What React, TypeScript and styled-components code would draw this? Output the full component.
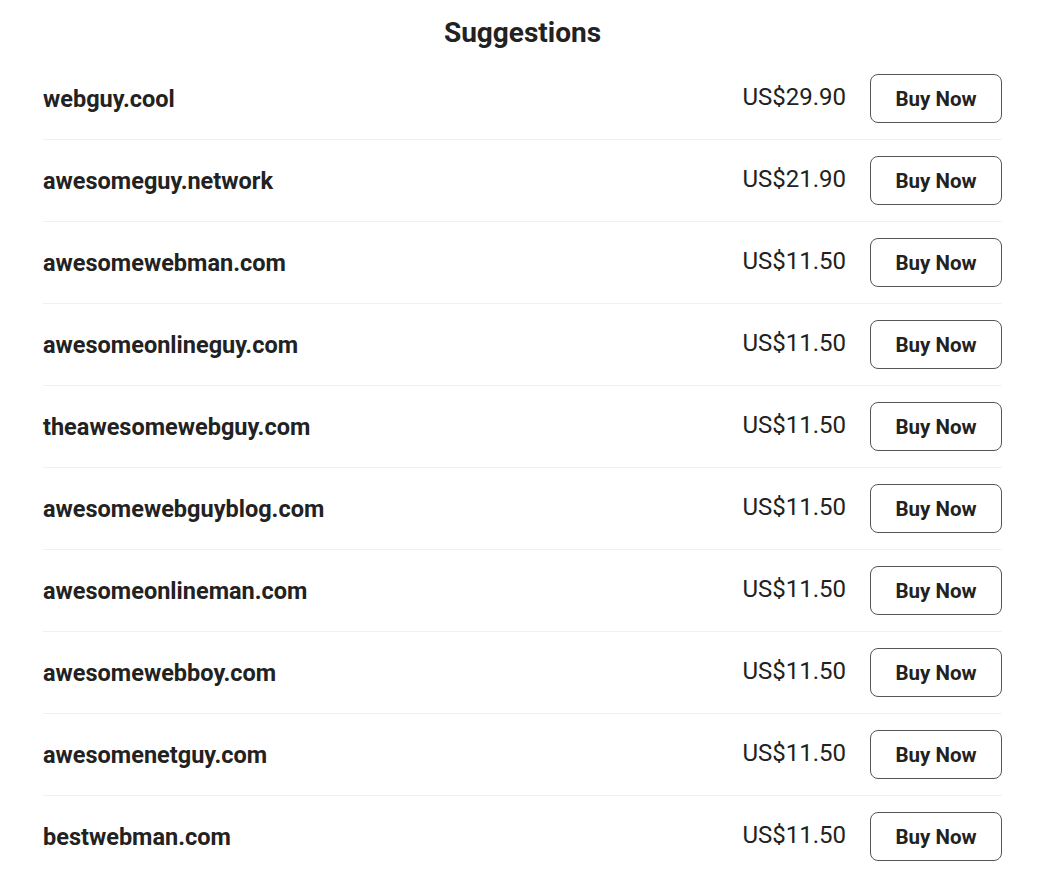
import React from 'react';
import styled, { createGlobalStyle } from 'styled-components';

const GlobalStyle = createGlobalStyle`
  body {
    margin: 0;
    background: #ffffff;
    font-family: Roboto, 'Liberation Sans', sans-serif;
    color: #222222;
  }
`;

const Container = styled.section`
  width: 959px;
  margin: 0 auto 0 43px;
  padding-top: 16px;
`;

const Title = styled.h2`
  font-size: 28px;
  font-weight: 700;
  line-height: 33px;
  text-align: center;
  margin: 0 0 9px;
  color: #222222;
`;

const List = styled.ul`
  list-style: none;
  margin: 0;
  padding: 0;
`;

const Row = styled.li`
  display: flex;
  align-items: center;
  padding: 16px 0;
  border-bottom: 1px solid #f0f0f0;
`;

const Domain = styled.span`
  flex: 1;
  font-size: 23.5px;
  font-weight: 700;
  color: #222222;
`;

const Price = styled.span`
  font-size: 24px;
  font-weight: 400;
  color: #222222;
  margin-right: 24px;
  margin-top: -4px;
`;

const BuyButton = styled.button`
  width: 132px;
  height: 49px;
  border: 1px solid #555555;
  border-radius: 8px;
  background: #ffffff;
  font-family: Roboto, 'Liberation Sans', sans-serif;
  font-size: 20.5px;
  font-weight: 700;
  color: #222222;
  cursor: pointer;
`;

const suggestions = [
  { domain: 'webguy.cool', price: 'US$29.90' },
  { domain: 'awesomeguy.network', price: 'US$21.90' },
  { domain: 'awesomewebman.com', price: 'US$11.50' },
  { domain: 'awesomeonlineguy.com', price: 'US$11.50' },
  { domain: 'theawesomewebguy.com', price: 'US$11.50' },
  { domain: 'awesomewebguyblog.com', price: 'US$11.50' },
  { domain: 'awesomeonlineman.com', price: 'US$11.50' },
  { domain: 'awesomewebboy.com', price: 'US$11.50' },
  { domain: 'awesomenetguy.com', price: 'US$11.50' },
  { domain: 'bestwebman.com', price: 'US$11.50' },
];

const App: React.FC = () => {
  return (
    <>
      <GlobalStyle />
      <Container>
        <Title>Suggestions</Title>
        <List>
          {suggestions.map((s) => (
            <Row key={s.domain}>
              <Domain>{s.domain}</Domain>
              <Price>{s.price}</Price>
              <BuyButton>Buy Now</BuyButton>
            </Row>
          ))}
        </List>
      </Container>
    </>
  );
};

export default App;
